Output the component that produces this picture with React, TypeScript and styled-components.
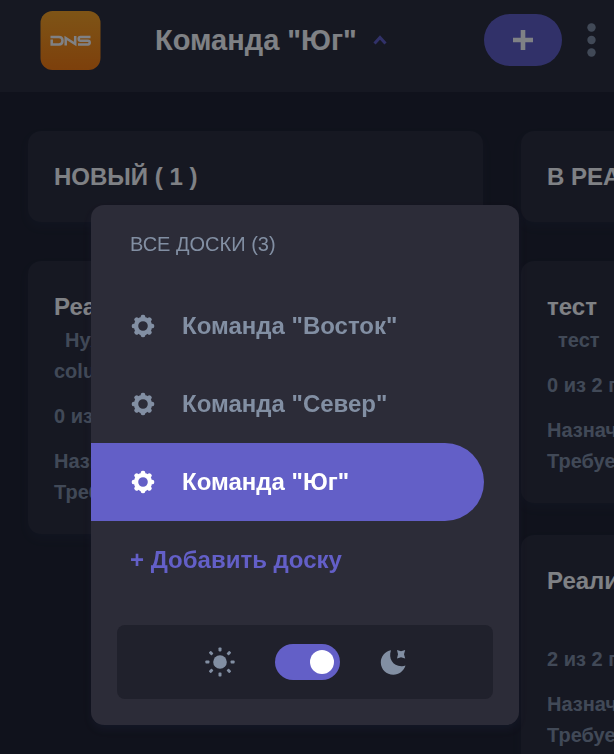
import React from 'react';
import styled, { createGlobalStyle } from 'styled-components';

const colors = {
  page: '#20212c',
  surface: '#2c2c38',
  accent: '#635fc7',
  muted: '#828fa3',
  white: '#ffffff',
};

const GlobalStyle = createGlobalStyle`
  *, *::before, *::after { box-sizing: border-box; }
  body {
    margin: 0;
    overflow: hidden;
    background: ${colors.page};
    color: ${colors.white};
    font-family: "Liberation Sans", Arial, sans-serif;
  }
  h1, h2, h3, p, ul { margin: 0; padding: 0; }
  ul { list-style: none; }
  button { border: 0; padding: 0; background: none; color: inherit; font: inherit; cursor: pointer; }
`;

const Page = styled.div`
  display: flex;
  flex-direction: column;
  height: 100vh;
  overflow: hidden;
`;

const Header = styled.header`
  display: flex;
  align-items: center;
  flex: none;
  padding: 10px 18px 22px 40px;
  background: ${colors.surface};
`;

const Logo = styled.svg`
  flex: none;
  width: 61px;
  height: 60px;
`;

const BoardTitle = styled.button`
  display: flex;
  align-items: center;
  gap: 16px;
  margin-left: 54px;
  font-size: 29px;
  font-weight: 700;
  line-height: 40px;
  white-space: nowrap;
`;

const HeaderActions = styled.div`
  display: flex;
  align-items: center;
  gap: 25px;
  margin-left: auto;
`;

const AddTask = styled.button`
  display: flex;
  align-items: center;
  justify-content: center;
  width: 78px;
  height: 52px;
  border-radius: 26px;
  background: ${colors.accent};
`;

const MoreButton = styled.button`
  display: flex;
`;

const Board = styled.main`
  display: flex;
  flex: 1;
  gap: 38px;
  padding: 39px 28px;
  overflow: hidden;
`;

const Column = styled.section`
  display: flex;
  flex: none;
  flex-direction: column;
  gap: 32px;
  width: 455px;
`;

const ColumnTitle = styled.h2`
  margin-bottom: 7px;
  padding: 26px;
  border-radius: 13px;
  background: ${colors.surface};
  box-shadow: 0 5px 8px rgba(54, 78, 126, 0.1);
  font-size: 24px;
  line-height: 39px;
  white-space: nowrap;
`;

const Card = styled.article`
  padding: 30px 26px 26px;
  border-radius: 13px;
  background: ${colors.surface};
  box-shadow: 0 5px 8px rgba(54, 78, 126, 0.1);
  color: ${colors.muted};
  font-size: 20px;
  font-weight: 700;
  line-height: 31px;
`;

const CardTitle = styled.h3`
  margin-bottom: 2px;
  color: ${colors.white};
  font-size: 24px;
  line-height: 32px;
`;

const Description = styled.p`
  min-height: 31px;
  text-indent: 11px;
`;

const Progress = styled.p`
  margin: 14px 0;
`;

const Scrim = styled.div`
  position: fixed;
  inset: 0;
  padding: 205px 95px 29px 91px;
  background: rgba(0, 3, 12, 0.5);
`;

const Menu = styled.div`
  display: flex;
  flex-direction: column;
  padding: 24px 0 26px;
  border-radius: 13px;
  background: ${colors.surface};
  box-shadow: 0 5px 8px rgba(54, 78, 126, 0.1);
`;

const MenuTitle = styled.h2`
  margin: 0 39px 27px;
  color: ${colors.muted};
  font-size: 20px;
  font-weight: 400;
  line-height: 31px;
`;

const BoardItem = styled.button<{ $active?: boolean }>`
  display: flex;
  align-items: center;
  gap: 26px;
  width: calc(100% - 35px);
  height: 78px;
  padding: 0 39px;
  border-radius: 0 39px 39px 0;
  background: ${(p) => (p.$active ? colors.accent : 'transparent')};
  color: ${(p) => (p.$active ? colors.white : colors.muted)};
  font-size: 24px;
  font-weight: 700;
  white-space: nowrap;
`;

const AddBoard = styled.button`
  align-self: flex-start;
  height: 78px;
  margin: 0 39px;
  color: ${colors.accent};
  font-size: 24px;
  font-weight: 700;
`;

const ThemeBar = styled.div`
  display: flex;
  align-items: center;
  justify-content: center;
  gap: 40px;
  height: 74px;
  margin: 26px 26px 0;
  border-radius: 8px;
  background: ${colors.page};
  color: ${colors.muted};
`;

const Switch = styled.input`
  appearance: none;
  display: flex;
  align-items: center;
  width: 65px;
  height: 36px;
  margin: 0;
  padding: 0 6px;
  border-radius: 18px;
  background: ${colors.accent};
  cursor: pointer;

  &::before {
    content: '';
    width: 24px;
    height: 24px;
    border-radius: 50%;
    background: ${colors.white};
  }

  &:checked {
    justify-content: flex-end;
  }
`;

const angles = [0, 45, 90, 135, 180, 225, 270, 315];

const GearIcon = () => (
  <svg width="26" height="26" viewBox="0 0 26 26" aria-hidden="true">
    <circle cx="13" cy="13" r="7" fill="none" stroke="currentColor" strokeWidth="4.4" />
    {angles.map((a) => (
      <rect key={a} x="10.7" y="1.8" width="4.6" height="5" rx="1.9" fill="currentColor" transform={`rotate(${a} 13 13)`} />
    ))}
  </svg>
);

const SunIcon = () => (
  <svg width="30" height="30" viewBox="0 0 30 30" aria-hidden="true">
    <circle cx="15" cy="15" r="6.8" fill="currentColor" />
    {angles.map((a) => (
      <rect key={a} x="13.5" y="0.4" width="3" height="4" rx="0.8" fill="currentColor" transform={`rotate(${a} 15 15)`} />
    ))}
  </svg>
);

const MoonIcon = () => (
  <svg width="26" height="26" viewBox="0 0 26 26" aria-hidden="true">
    <path
      fill="currentColor"
      d="M11 1.2C8.2 9 12.5 17 21.5 17.2C23 17.3 24.3 17 25.5 16.6C23.8 22 19 25.8 13.3 25.8C6.5 25.8 0.8 20.3 0.8 13.5C0.8 7.4 5 2.4 11 1.2Z"
    />
    <path
      fill="currentColor"
      d="M17 1L21 2.2L25.2 1L24 5.2L25.2 9.4L21 8.2L17 9.4L18 5.2Z"
    />
  </svg>
);

const DnsLogo = () => (
  <Logo viewBox="0 0 61 60" role="img" aria-label="DNS">
    <defs>
      <linearGradient id="dns" x1="0" y1="0" x2="0" y2="1">
        <stop offset="0" stopColor="#fca521" />
        <stop offset="1" stopColor="#fb7c0b" />
      </linearGradient>
    </defs>
    <rect x="0.5" y="1" width="60" height="59" rx="12" fill="url(#dns)" />
    <g fill="none" stroke="#fff" strokeWidth="2.5">
      <path d="M11.7 29.4V34.4H19Q22.5 34.400 22.500 30.700Q22.500 27 19 27H10.500" />
      <path d="M25.700 35.600V28L35.200 34V26" />
      <path d="M50.500 27H40.500Q38.700 27 38.700 28.900Q38.700 30.700 40.500 30.700H48Q49.700 30.700 49.700 32.500Q49.700 34.400 48 34.400H38" />
    </g>
  </Logo>
);

const columns = [
  {
    title: 'НОВЫЙ ( 1 )',
    cards: [
      { title: 'Реализовать', text: 'Нужно добавить новую колонку column', progress: '0 из 3 подзадач' },
    ],
  },
  {
    title: 'В РЕАЛИЗАЦИИ ( 2 )',
    cards: [
      { title: 'тест', text: 'тест', progress: '0 из 2 подзадач' },
      { title: 'Реализовать', text: '', progress: '2 из 2 подзадач' },
    ],
  },
];

const boards = ['Команда "Восток"', 'Команда "Север"', 'Команда "Юг"'];

export default function App() {
  const [active, setActive] = React.useState(2);
  return (
    <>
      <GlobalStyle />
      <Page>
        <Header>
          <DnsLogo />
          <BoardTitle>
            {boards[active]}
            <svg width="14" height="10" viewBox="0 0 14 10" aria-hidden="true">
              <path d="M1.5 8.5L7 2.5L12.5 8.5" fill="none" stroke={colors.accent} strokeWidth="3" />
            </svg>
          </BoardTitle>
          <HeaderActions>
            <AddTask aria-label="Добавить задачу">
              <svg width="20" height="20" viewBox="0 0 20 20" aria-hidden="true">
                <path d="M10 0V20M0 10H20" stroke="#fff" strokeWidth="4.6" />
              </svg>
            </AddTask>
            <MoreButton aria-label="Меню доски">
              <svg width="9" height="34" viewBox="0 0 9 34" fill={colors.muted} aria-hidden="true">
                <circle cx="4.5" cy="4.5" r="4.2" />
                <circle cx="4.5" cy="17" r="4.2" />
                <circle cx="4.5" cy="29.5" r="4.2" />
              </svg>
            </MoreButton>
          </HeaderActions>
        </Header>
        <Board>
          {columns.map((column) => (
            <Column key={column.title}>
              <ColumnTitle>{column.title}</ColumnTitle>
              {column.cards.map((card) => (
                <Card key={card.title}>
                  <CardTitle>{card.title}</CardTitle>
                  <Description>{card.text}</Description>
                  <Progress>{card.progress}</Progress>
                  <p>Назначено:</p>
                  <p>Требуется:</p>
                </Card>
              ))}
            </Column>
          ))}
        </Board>
      </Page>
      <Scrim>
        <Menu>
          <MenuTitle>ВСЕ ДОСКИ (3)</MenuTitle>
          <ul>
            {boards.map((name, i) => (
              <li key={name}>
                <BoardItem $active={i === active} onClick={() => setActive(i)}>
                  <GearIcon />
                  {name}
                </BoardItem>
              </li>
            ))}
          </ul>
          <AddBoard>+ Добавить доску</AddBoard>
          <ThemeBar>
            <SunIcon />
            <Switch type="checkbox" role="switch" defaultChecked aria-label="Тёмная тема" />
            <MoonIcon />
          </ThemeBar>
        </Menu>
      </Scrim>
    </>
  );
}
